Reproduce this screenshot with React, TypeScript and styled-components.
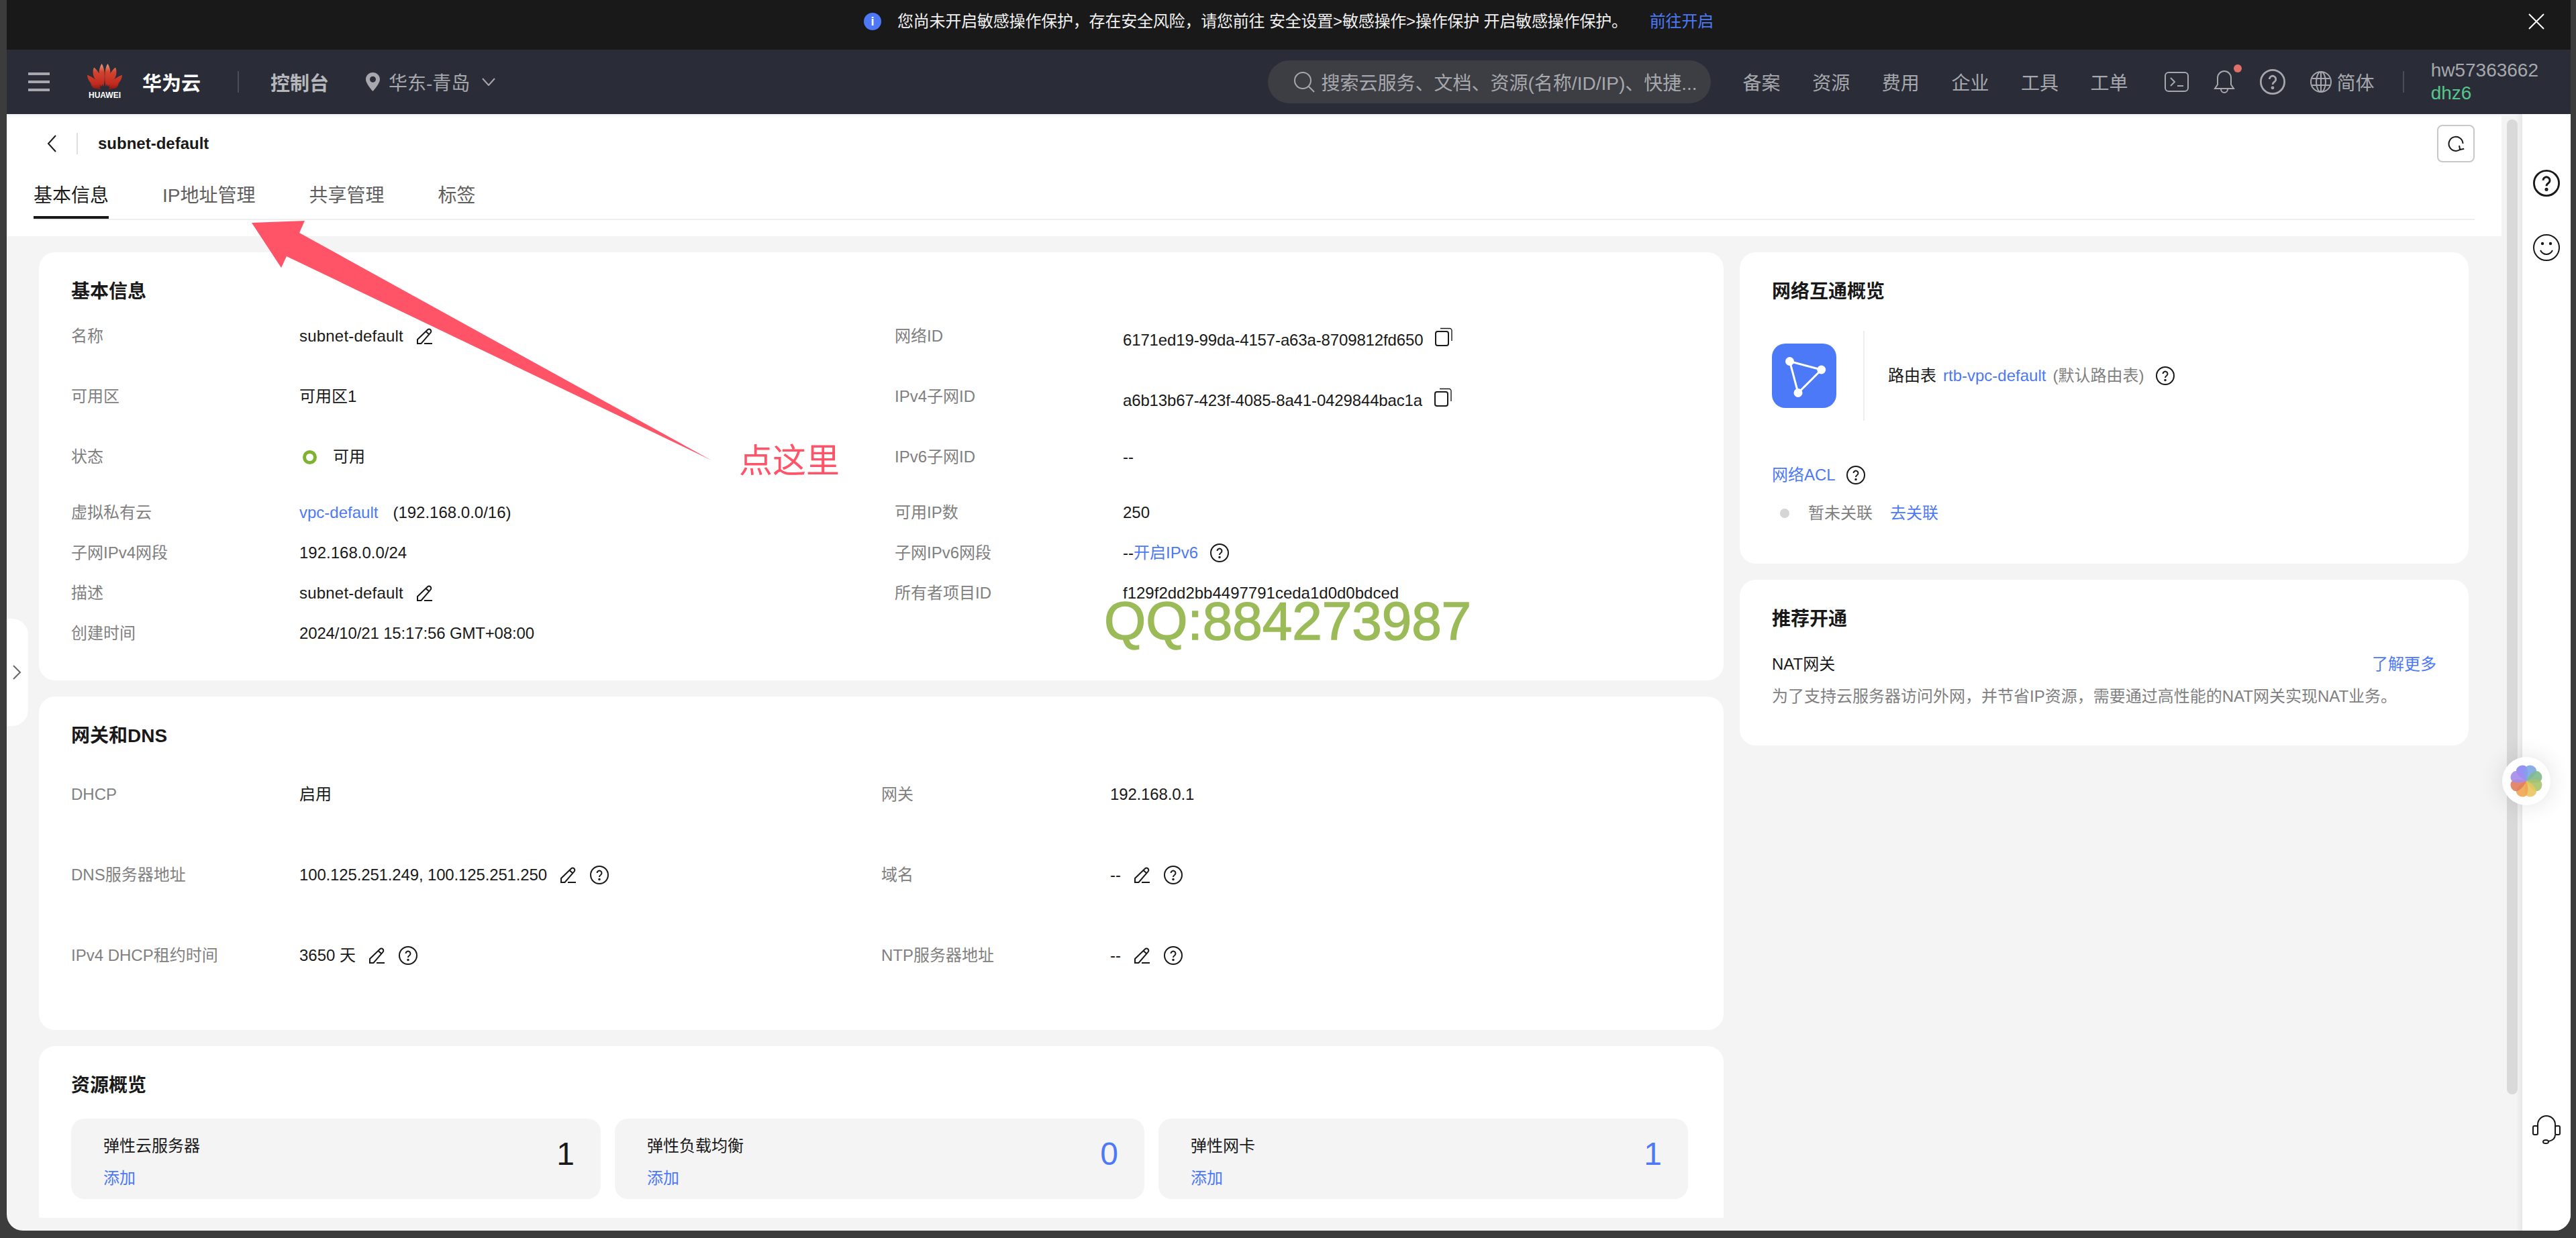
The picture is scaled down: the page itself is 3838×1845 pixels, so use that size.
import React from 'react';
import styled, { createGlobalStyle } from 'styled-components';

const Reset = createGlobalStyle`
    html, body {
        margin: 0;
        width: 3838px;
        height: 1845px;
        overflow: hidden;
        background: #3c3c3c;
        font-family: "Liberation Sans", "Noto Sans CJK SC", sans-serif;
    }
    * { box-sizing: border-box; }
`

const BLUE = '#4d79f6';
const NAV_TEXT = '#a6a8ad';

const Glyph = styled.svg`
    display: block;
    flex: none;
    fill: none;
    stroke: currentColor;
    stroke-width: 2;
`

const CopyGlyph = styled(Glyph)`
    margin-top: 5px;
`

const HelpIcon = ({size = 28}: {size?: number}) => (
    <Glyph width={size} height={size} viewBox="0 0 28 28">
        <circle cx="14" cy="14" r="13" />
        <path d="M10.5 11a3.5 3.5 0 1 1 5.4 3c-1.2.8-1.9 1.4-1.9 3" />
        <circle cx="14" cy="20.5" r="0.8" />
    </Glyph>
)

const EditIcon = () => (
    <Glyph width="24" height="24" viewBox="0 0 24 24">
        <path d="M1 23v-6L16 2.5a3.1 3.1 0 0 1 4.4 0 3.1 3.1 0 0 1 0 4.4L6.5 23H1Z" />
        <path d="M13.5 5l5 4.5M11 23h12" />
    </Glyph>
)

const CopyIcon = () => (
    <CopyGlyph width="26" height="28" viewBox="0 0 26 28">
        <rect x="1" y="6" width="19" height="21" rx="3" />
        <path d="M8 1.5h14a3 3 0 0 1 3 3V20" strokeWidth="1.4" />
    </CopyGlyph>
)

const PinIcon = () => (
    <svg width="21" height="28" viewBox="0 0 21 28" style={{flex: 'none'}}>
        <path fillRule="evenodd" fill={NAV_TEXT} d="M10.5 0C4.7 0 0 4.6 0 10.3 0 17 10.5 28 10.5 28S21 17 21 10.3C21 4.6 16.3 0 10.5 0Zm0 5.8a4.5 4.5 0 1 1 0 9 4.5 4.5 0 0 1 0-9Z" />
    </svg>
)

const HuaweiPetals = () => {
    const left = [
        'M24.5 34C17 23 15 10 21.5 0c4.5 6 5.5 20 3 34Z',
        'M22 34C10 26 6 14 10 5.5c6 4.5 14 16.5 12 28.5Z',
        'M20 35C8 34 0 26 0 16.5c8 3.5 18 9.5 20 18.5Z',
        'M21 38.5 10 36.5c-2-1-4-4-5-7.5 6 1 12.5 4.5 16 9.5Z',
    ];
    return (
        <svg width="52" height="40" viewBox="0 0 52 40">
            <defs>
                <linearGradient id="petal" x1="0" y1="0" x2="0" y2="40" gradientUnits="userSpaceOnUse">
                    <stop offset="0" stopColor="#e9a184" />
                    <stop offset="0.3" stopColor="#d2452f" />
                    <stop offset="0.75" stopColor="#c22a1e" />
                    <stop offset="1" stopColor="#7c1712" />
                </linearGradient>
            </defs>
            {left.map((d, i) => <path key={i} d={d} fill="url(#petal)" />)}
            <g transform="translate(52 0) scale(-1 1)">
                {left.map((d, i) => <path key={i} d={d} fill="url(#petal)" />)}
            </g>
        </svg>
    )
}

const FlowerIcon = () => {
    const petals = ['#8b86f4', '#7da6e6', '#7fb98c', '#a9c36c', '#e9c55f', '#f0a552', '#e07c5c', '#a48cec'];
    return (
        <svg width="50" height="50" viewBox="-25 -25 50 50">
            {petals.map((c, i) => (
                <path
                    key={c}
                    d="M0 0C-5-5-9-13-8.500-18-8-23-3-24.500 0-24.500 3-24.500 8-23 8.500-18 9-13 5-5 0 0Z"
                    fill={c}
                    fillOpacity="0.9"
                    transform={`rotate(${-22.5 + i * 45})`}
                />
            ))}
        </svg>
    )
}

const Window = styled.div`
    position: relative;
    width: 3820px;
    height: 1834px;
    margin-left: 10px;
    display: flex;
    flex-direction: column;
    overflow: hidden;
    background: #f4f4f4;
    border-radius: 0 0 24px 24px;
`

const Banner = styled.div`
    height: 74px;
    flex: none;
    background: #191919;
    display: grid;
    grid-template-columns: 1fr auto 1fr;
    align-items: center;
    padding-bottom: 11px;
    color: #f0f0f0;
    font-size: 24px;
    line-height: 36px;
`

const BannerMessage = styled.div`
    grid-column: 2;
    display: flex;
    align-items: center;
    gap: 24px;
    white-space: pre;
    letter-spacing: -0.2px;
`

const InfoDot = styled.span`
    width: 26px;
    height: 26px;
    border-radius: 50%;
    background: ${BLUE};
    color: #fff;
    font-size: 18px;
    line-height: 26px;
    font-weight: 700;
    text-align: center;
`

const BannerLink = styled.span`
    color: ${BLUE};
    margin-left: 33px;
`

const BannerClose = styled.div`
    grid-column: 3;
    justify-self: end;
    margin-right: 38px;
    color: #fff;
    display: flex;
`

const Nav = styled.div`
    height: 96px;
    flex: none;
    background: #2a2d37;
    display: flex;
    align-items: center;
    justify-content: space-between;
    padding: 0 48px 0 32px;
    color: ${NAV_TEXT};
    font-size: 28px;
    white-space: nowrap;
`

const NavGroup = styled.div`
    display: flex;
    align-items: center;
`

const Burger = styled.div`
    width: 32px;
    height: 28px;
    border-top: 4px solid ${NAV_TEXT};
    border-bottom: 4px solid ${NAV_TEXT};
    margin-right: 56px;
    display: flex;
    align-items: center;
    &::before {
        content: '';
        display: block;
        width: 100%;
        height: 4px;
        background: ${NAV_TEXT};
    }
`

const Logo = styled.div`
    width: 52px;
    display: flex;
    flex-direction: column;
    align-items: center;
    margin-right: 30px;
`

const LogoWord = styled.span`
    color: #fff;
    font-size: 12px;
    line-height: 14px;
    font-weight: 700;
`

const Brand = styled.span`
    color: #fff;
    font-size: 29px;
    font-weight: 700;
`

const NavDivider = styled.span<{ $before: number; $after: number }>`
    width: 2px;
    height: 32px;
    background: #4a4d56;
    margin: 0 ${p => p.$after}px 0 ${p => p.$before}px;
`

const Console = styled.span`
    font-size: 29px;
    font-weight: 700;
    color: #b5b7bb;
    margin-right: 55px;
`

const Region = styled.span`
    margin: 0 18px 0 13px;
`

const Search = styled.div`
    width: 660px;
    height: 64px;
    border-radius: 32px;
    background: #3d3e43;
    display: flex;
    align-items: center;
    gap: 10px;
    padding-left: 38px;
    margin-right: 48px;
    color: ${NAV_TEXT};
`

const NavLinks = styled.div`
    display: flex;
    gap: 47.6px;
    margin-right: 54px;
`

const BellWrap = styled.span`
    position: relative;
    display: block;
    margin: 0 37px;
`

const RedDot = styled.span`
    position: absolute;
    top: -7px;
    right: -10px;
    width: 12px;
    height: 12px;
    border-radius: 50%;
    background: #e0706a;
`

const Lang = styled.span`
    margin-left: 8px;
`

const User = styled.div`
    line-height: 32px;
    display: flex;
    flex-direction: column;
    gap: 2px;
`

const UserAlias = styled.span`
    color: #57c58d;
`

const Body = styled.div`
    flex: 1;
    min-height: 0;
    display: flex;
`

const MainColumn = styled.div`
    width: 3717px;
    flex: none;
    display: flex;
    flex-direction: column;
`

const Header = styled.div`
    height: 182px;
    flex: none;
    background: #fff;
    padding: 16px 40px 0;
    box-shadow: inset 0 6px 6px -6px rgba(0, 0, 0, 0.12);
`

const TitleRow = styled.div`
    height: 56px;
    display: flex;
    align-items: center;
    padding-left: 20px;
    color: #191919;
`

const TitleDivider = styled.span`
    width: 2px;
    height: 32px;
    background: #dfdfdf;
    margin: 0 30px;
`

const PageTitle = styled.span`
    flex: 1;
    font-size: 24px;
    font-weight: 700;
`

const RefreshButton = styled.div`
    width: 56px;
    height: 56px;
    border: 2px solid #c8c8c8;
    border-radius: 8px;
    display: flex;
    align-items: center;
    justify-content: center;
`

const TabBar = styled.div`
    margin-top: 30px;
    display: flex;
    gap: 80px;
    border-bottom: 2px solid #eeeeee;
`

const Tab = styled.div<{ $active?: boolean }>`
    font-size: 28px;
    line-height: 40px;
    padding-bottom: 10px;
    color: ${p => (p.$active ? '#191919' : '#5e5e5e')};
    border-bottom: 4px solid ${p => (p.$active ? '#191919' : 'transparent')};
`

const Scroller = styled.div`
    flex: 1;
    min-height: 0;
    margin-bottom: 19px;
    overflow: hidden;
    padding: 24px 49px 0 48px;
    display: flex;
    gap: 24px;
    align-items: flex-start;
`

const Column = styled.div<{ $width: number }>`
    width: ${p => p.$width}px;
    flex: none;
    display: flex;
    flex-direction: column;
    gap: 24px;
`

const Card = styled.section<{ $height?: number }>`
    background: #fff;
    border-radius: 24px;
    padding: 39px 48px 0;
    height: ${p => (p.$height ? `${p.$height}px` : 'auto')};
    color: #191919;
    font-size: 24px;
    line-height: 36px;
`

const CardTitle = styled.h2<{ $gap: number }>`
    margin: 0 0 ${p => p.$gap}px;
    font-size: 28px;
    line-height: 40px;
    font-weight: 700;
    color: #191919;
`

const DetailGrid = styled.div<{ $split: number; $rows: string }>`
    display: grid;
    grid-template-columns: ${p => p.$split}px 1fr;
    grid-template-rows: ${p => p.$rows};
`

const Field = styled.div<{ $labelWidth: number }>`
    display: grid;
    grid-template-columns: ${p => p.$labelWidth}px 1fr;
    align-items: start;
`

const FieldLabel = styled.span`
    color: #808080;
`

const FieldValue = styled.div<{ $gap?: number }>`
    display: flex;
    align-items: center;
    gap: ${p => p.$gap ?? 20}px;
    min-height: 36px;
    white-space: nowrap;
`

const IdValue = styled(FieldValue)`
    align-items: flex-start;
`

const IdText = styled.span`
    padding-top: 6px;
    letter-spacing: -0.14px;
`

const Numeric = styled.span`
    letter-spacing: -0.15px;
`

const Wide = styled.span`
    letter-spacing: 0.2px;
`

const Link = styled.span`
    color: ${BLUE};
`

const StatusRing = styled.span`
    width: 21px;
    height: 21px;
    border-radius: 50%;
    border: 5px solid #7db32f;
    margin: 0 4px 0 5px;
`

const Tiles = styled.div`
    display: grid;
    grid-template-columns: repeat(3, 789px);
    gap: 21px;
    padding-bottom: 48px;
`

const Tile = styled.div`
    height: 120px;
    border-radius: 20px;
    background: #f4f4f4;
    padding: 23px 39px 0 48px;
    display: grid;
    grid-template-columns: 1fr auto;
    align-content: start;
    row-gap: 12px;
`

const TileCount = styled.span<{ $blue?: boolean }>`
    grid-column: 2;
    grid-row: 1 / 3;
    align-self: start;
    font-size: 48px;
    line-height: 60px;
    color: ${p => (p.$blue ? BLUE : '#191919')};
`

const RouteRow = styled.div`
    height: 134px;
    display: flex;
    align-items: center;
    margin-bottom: 63px;
`

const RouteTile = styled.div`
    width: 96px;
    height: 96px;
    border-radius: 20px;
    background: #4b79f8;
`

const RouteDivider = styled.span`
    width: 2px;
    height: 134px;
    background: #eeeeee;
    margin: 0 35px 0 40px;
`

const InlineRow = styled.div<{ $gap: number }>`
    display: flex;
    align-items: center;
    gap: ${p => p.$gap}px;
    white-space: nowrap;
`

const HelpSlot = styled.span`
    margin-left: 8px;
`

const Muted = styled.span`
    color: #808080;
`

const AclRow = styled(InlineRow)`
    margin-top: 21px;
    padding-left: 12px;
    padding-bottom: 57px;
`

const GrayDot = styled.span`
    width: 14px;
    height: 14px;
    border-radius: 50%;
    background: #d5d5d5;
    margin-right: 2px;
`

const NatHead = styled.div`
    display: flex;
    justify-content: space-between;
`

const NatDesc = styled.div`
    color: #808080;
    margin-top: 12px;
    padding-bottom: 55px;
`

const Track = styled.div`
    width: 31px;
    flex: none;
    padding: 8px 0 0 8px;
    background: linear-gradient(to right, #f4f4f4 70%, #e6e6e6);
`

const Thumb = styled.div`
    width: 16px;
    height: 1453px;
    border-radius: 8px;
    background: #d9d9d9;
`

const Side = styled.aside`
    width: 72px;
    flex: none;
    background: #fff;
    display: flex;
    flex-direction: column;
    align-items: center;
    gap: 56px;
    padding: 83px 0 129px;
    color: #191919;
`

const SideBottom = styled.div`
    margin-top: auto;
`

const CollapseTab = styled.div`
    position: absolute;
    left: 0;
    top: 922px;
    width: 32px;
    height: 160px;
    background: #fff;
    border-radius: 0 24px 24px 0;
    display: flex;
    align-items: center;
    padding-left: 8px;
    color: #666;
`

const FloatBall = styled.div`
    position: absolute;
    left: 3718px;
    top: 1128px;
    width: 72px;
    height: 72px;
    border-radius: 50%;
    background: #fff;
    box-shadow: 0 0 36px rgba(0, 0, 0, 0.12);
    display: flex;
    align-items: center;
    justify-content: center;
`

const Arrow = styled.svg`
    position: absolute;
    left: 365px;
    top: 329px;
`

const Callout = styled.span`
    position: absolute;
    left: 1091px;
    top: 657px;
    font-size: 50px;
    line-height: 50px;
    color: #ff5468;
    font-family: "Noto Sans CJK SC", sans-serif;
`

const Watermark = styled.span`
    position: absolute;
    left: 1635px;
    top: 886px;
    font-size: 80px;
    line-height: 80px;
    color: #9bbb59;
    white-space: nowrap;
    -webkit-text-stroke: 1.5px #9bbb59;
`

const tabs = ['基本信息', 'IP地址管理', '共享管理', '标签'];
const navLinks = ['备案', '资源', '费用', '企业', '工具', '工单'];

const App = () => {
    return (
        <>
            <Reset />
            <Window>
                <Banner>
                    <BannerMessage>
                        <InfoDot>i</InfoDot>
                        <span>
                            您尚未开启敏感操作保护，存在安全风险，请您前往 安全设置&gt;敏感操作&gt;操作保护 开启敏感操作保护。
                            <BannerLink>前往开启</BannerLink>
                        </span>
                    </BannerMessage>
                    <BannerClose>
                        <Glyph width="26" height="24" viewBox="0 0 26 24" strokeWidth="2.4">
                            <path d="M2 1l22 22M24 1 2 23" />
                        </Glyph>
                    </BannerClose>
                </Banner>
                <Nav>
                    <NavGroup>
                        <Burger />
                        <Logo>
                            <HuaweiPetals />
                            <LogoWord>HUAWEI</LogoWord>
                        </Logo>
                        <Brand>华为云</Brand>
                        <NavDivider $before={55} $after={47} />
                        <Console>控制台</Console>
                        <PinIcon />
                        <Region>华东-青岛</Region>
                        <Glyph width="20" height="12" viewBox="0 0 20 12"><path d="M1 1l9 10 9-10" /></Glyph>
                    </NavGroup>
                    <NavGroup>
                        <Search>
                            <Glyph width="32" height="32" viewBox="0 0 32 32" stroke="#8a8b90">
                                <circle cx="14" cy="14" r="12" />
                                <path d="M23 23l8 8" />
                            </Glyph>
                            <span>搜索云服务、文档、资源(名称/ID/IP)、快捷...</span>
                        </Search>
                        <NavLinks>
                            {navLinks.map(l => <span key={l}>{l}</span>)}
                        </NavLinks>
                        <Glyph width="36" height="30" viewBox="0 0 36 30">
                            <rect x="1" y="1" width="34" height="28" rx="5" />
                            <path d="M9 9l6 6-6 6M19 21h9" />
                        </Glyph>
                        <BellWrap>
                            <Glyph width="32" height="38" viewBox="0 0 32 38">
                                <path d="M2 29h28l-4-6V13a10 10 0 0 0-20 0v10l-4 6Z" />
                                <path d="M11 30a5 5 0 0 0 10 0" />
                            </Glyph>
                            <RedDot />
                        </BellWrap>
                        <HelpIcon size={38} />
                        <Glyph width="32" height="32" viewBox="0 0 32 32" style={{marginLeft: 37}}>
                            <circle cx="16" cy="16" r="15" />
                            <ellipse cx="16" cy="16" rx="7" ry="15" />
                            <path d="M3 11h26M3 21h26M16 1v30" />
                        </Glyph>
                        <Lang>简体</Lang>
                        <NavDivider $before={42} $after={40} />
                        <User>
                            <span>hw57363662</span>
                            <UserAlias>dhz6</UserAlias>
                        </User>
                    </NavGroup>
                </Nav>
                <Body>
                    <MainColumn>
                        <Header>
                            <TitleRow>
                                <Glyph width="14" height="26" viewBox="0 0 14 26" stroke="#555"><path d="M13 1 2 13l11 12" /></Glyph>
                                <TitleDivider />
                                <PageTitle>subnet-default</PageTitle>
                                <RefreshButton>
                                    <Glyph width="26" height="26" viewBox="0 0 26 26">
                                        <path d="M19 22A10.5 10.5 0 1 1 23.500 13" />
                                        <path d="M18 16l1.200 6 6-1.200" />
                                    </Glyph>
                                </RefreshButton>
                            </TitleRow>
                            <TabBar>
                                {tabs.map((t, i) => <Tab key={t} $active={i === 0}>{t}</Tab>)}
                            </TabBar>
                        </Header>
                        <Scroller>
                            <Column $width={2510}>
                                <Card $height={638}>
                                    <CardTitle $gap={28}>基本信息</CardTitle>
                                    <DetailGrid $split={1227} $rows="90px 90px 83px 60px 60px 60px 36px">
                                        <Field $labelWidth={340}><FieldLabel>名称</FieldLabel><FieldValue><Wide>subnet-default</Wide><EditIcon /></FieldValue></Field>
                                        <Field $labelWidth={340}><FieldLabel>网络ID</FieldLabel><IdValue $gap={18}><IdText>6171ed19-99da-4157-a63a-8709812fd650</IdText><CopyIcon /></IdValue></Field>
                                        <Field $labelWidth={340}><FieldLabel>可用区</FieldLabel><FieldValue>可用区1</FieldValue></Field>
                                        <Field $labelWidth={340}><FieldLabel>IPv4子网ID</FieldLabel><IdValue $gap={18}><IdText>a6b13b67-423f-4085-8a41-0429844bac1a</IdText><CopyIcon /></IdValue></Field>
                                        <Field $labelWidth={340}><FieldLabel>状态</FieldLabel><FieldValue><StatusRing />可用</FieldValue></Field>
                                        <Field $labelWidth={340}><FieldLabel>IPv6子网ID</FieldLabel><FieldValue>--</FieldValue></Field>
                                        <Field $labelWidth={340}><FieldLabel>虚拟私有云</FieldLabel><FieldValue $gap={22}><Link>vpc-default</Link>(192.168.0.0/16)</FieldValue></Field>
                                        <Field $labelWidth={340}><FieldLabel>可用IP数</FieldLabel><FieldValue>250</FieldValue></Field>
                                        <Field $labelWidth={340}><FieldLabel>子网IPv4网段</FieldLabel><FieldValue>192.168.0.0/24</FieldValue></Field>
                                        <Field $labelWidth={340}><FieldLabel>子网IPv6网段</FieldLabel><FieldValue $gap={18}><span>--<Link>开启IPv6</Link></span><HelpIcon /></FieldValue></Field>
                                        <Field $labelWidth={340}><FieldLabel>描述</FieldLabel><FieldValue><Wide>subnet-default</Wide><EditIcon /></FieldValue></Field>
                                        <Field $labelWidth={340}><FieldLabel>所有者项目ID</FieldLabel><FieldValue>f129f2dd2bb4497791ceda1d0d0bdced</FieldValue></Field>
                                        <Field $labelWidth={340}><FieldLabel>创建时间</FieldLabel><FieldValue><Numeric>2024/10/21 15:17:56 GMT+08:00</Numeric></FieldValue></Field>
                                    </DetailGrid>
                                </Card>
                                <Card $height={497}>
                                    <CardTitle $gap={49}>网关和DNS</CardTitle>
                                    <DetailGrid $split={1207} $rows="120px 120px 36px">
                                        <Field $labelWidth={340}><FieldLabel>DHCP</FieldLabel><FieldValue>启用</FieldValue></Field>
                                        <Field $labelWidth={341}><FieldLabel>网关</FieldLabel><FieldValue><Numeric>192.168.0.1</Numeric></FieldValue></Field>
                                        <Field $labelWidth={340}><FieldLabel>DNS服务器地址</FieldLabel><FieldValue><Numeric>100.125.251.249, 100.125.251.250</Numeric><EditIcon /><HelpIcon /></FieldValue></Field>
                                        <Field $labelWidth={341}><FieldLabel>域名</FieldLabel><FieldValue>--<EditIcon /><HelpIcon /></FieldValue></Field>
                                        <Field $labelWidth={340}><FieldLabel>IPv4 DHCP租约时间</FieldLabel><FieldValue>3650 天<EditIcon /><HelpIcon /></FieldValue></Field>
                                        <Field $labelWidth={341}><FieldLabel>NTP服务器地址</FieldLabel><FieldValue>--<EditIcon /><HelpIcon /></FieldValue></Field>
                                    </DetailGrid>
                                </Card>
                                <Card>
                                    <CardTitle $gap={29}>资源概览</CardTitle>
                                    <Tiles>
                                        <Tile>
                                            <span>弹性云服务器</span>
                                            <TileCount>1</TileCount>
                                            <Link>添加</Link>
                                        </Tile>
                                        <Tile>
                                            <span>弹性负载均衡</span>
                                            <TileCount $blue>0</TileCount>
                                            <Link>添加</Link>
                                        </Tile>
                                        <Tile>
                                            <span>弹性网卡</span>
                                            <TileCount $blue>1</TileCount>
                                            <Link>添加</Link>
                                        </Tile>
                                    </Tiles>
                                </Card>
                            </Column>
                            <Column $width={1086}>
                                <Card $height={464}>
                                    <CardTitle $gap={38}>网络互通概览</CardTitle>
                                    <RouteRow>
                                        <RouteTile>
                                            <svg width="96" height="96" viewBox="0 0 96 96" stroke="#fff" strokeWidth="3" fill="#fff">
                                                <path d="M26.500 26.500 73.700 39 39 73.500Z" fill="none" />
                                                <circle cx="26.500" cy="26.500" r="5" />
                                                <circle cx="73.700" cy="39" r="5" />
                                                <circle cx="39" cy="73.500" r="5" />
                                            </svg>
                                        </RouteTile>
                                        <RouteDivider />
                                        <InlineRow $gap={10}>
                                            路由表
                                            <Link>rtb-vpc-default</Link>
                                            <Muted>(默认路由表)</Muted>
                                            <HelpSlot><HelpIcon /></HelpSlot>
                                        </InlineRow>
                                    </RouteRow>
                                    <InlineRow $gap={16}>
                                        <Link>网络ACL</Link>
                                        <HelpIcon />
                                    </InlineRow>
                                    <AclRow $gap={26}>
                                        <GrayDot />
                                        <Muted>暂未关联</Muted>
                                        <Link>去关联</Link>
                                    </AclRow>
                                </Card>
                                <Card>
                                    <CardTitle $gap={29}>推荐开通</CardTitle>
                                    <NatHead>
                                        <span>NAT网关</span>
                                        <Link>了解更多</Link>
                                    </NatHead>
                                    <NatDesc>为了支持云服务器访问外网，并节省IP资源，需要通过高性能的NAT网关实现NAT业务。</NatDesc>
                                </Card>
                            </Column>
                        </Scroller>
                    </MainColumn>
                    <Track><Thumb /></Track>
                    <Side>
                        <HelpIcon size={40} />
                        <Glyph width="40" height="40" viewBox="0 0 40 40">
                            <circle cx="20" cy="20" r="19" />
                            <path d="M11 24c2 4 5 6 9 6s7-2 9-6" />
                            <circle cx="14" cy="14" r="1.200" fill="currentColor" />
                            <circle cx="26" cy="14" r="1.200" fill="currentColor" />
                        </Glyph>
                        <SideBottom>
                            <Glyph width="42" height="44" viewBox="0 0 42 44">
                                <rect x="1" y="17" width="7" height="13" rx="2" />
                                <rect x="34" y="17" width="7" height="13" rx="2" />
                                <path d="M8 22V15a13 13 0 0 1 26 0v7M34 30c0 6-5 9-10 10" />
                                <ellipse cx="20" cy="40.500" rx="4" ry="2.500" />
                            </Glyph>
                        </SideBottom>
                    </Side>
                </Body>
                <CollapseTab>
                    <Glyph width="14" height="22" viewBox="0 0 14 22"><path d="M2 1l10 10L2 21" /></Glyph>
                </CollapseTab>
                <FloatBall><FlowerIcon /></FloatBall>
                <Arrow width="700" height="362" viewBox="375 329 700 362">
                    <path fill="#ff5468" d="M375 332 454 329 446 347 1060 686 427 382 419 399Z" />
                </Arrow>
                <Callout>点这里</Callout>
                <Watermark>QQ:884273987</Watermark>
            </Window>
        </>
    )
}

export default App;
